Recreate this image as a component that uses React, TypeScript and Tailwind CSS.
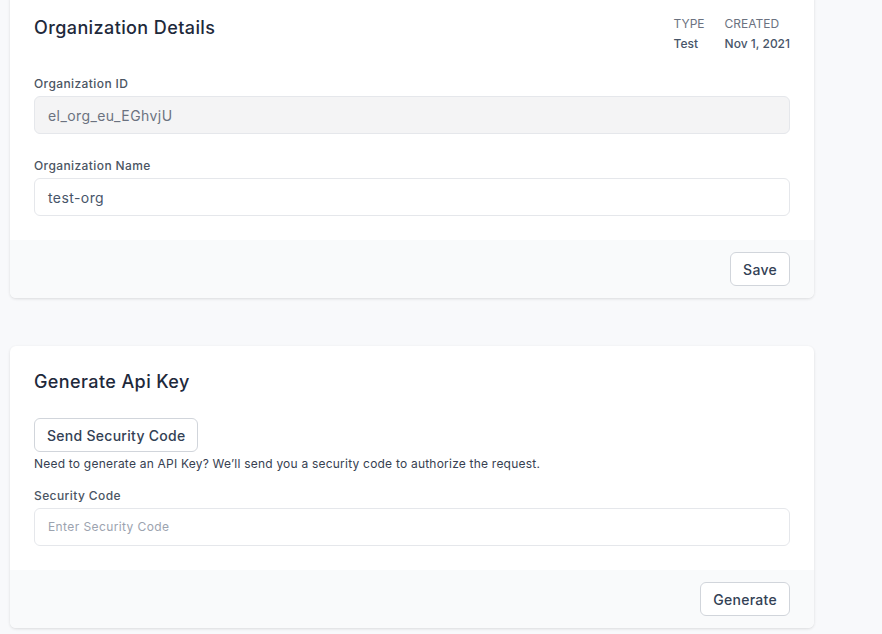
const font = { fontFamily: 'Inter, "Noto Sans", sans-serif' };

const Field = ({ label, value, placeholder, disabled }: { label: string; value?: string; placeholder?: string; disabled?: boolean }) => (
  <div className="flex flex-col gap-[4px]">
    <label className="text-[12px] leading-[16px] font-medium text-[#4b5563]">{label}</label>
    <div
      className={`h-[38px] flex items-center px-[13px] rounded-md border border-[#e5e7eb] ${
        disabled ? 'bg-[#f4f4f5] text-[#6b7280]' : 'bg-white text-[#475569]'
      }`}
    >
      {value ? (
        <span className="text-[14px] tracking-[0.03em]">{value}</span>
      ) : (
        <span className="text-[12px] text-[#9ca3af]">{placeholder}</span>
      )}
    </div>
  </div>
);

const Button = ({ children }: { children: React.ReactNode }) => (
  <button className="h-[34px] px-[12px] rounded-md border border-[#d1d5db] bg-white text-[14px] font-medium tracking-[0.02em] text-[#334155]">
    {children}
  </button>
);

export default function App() {
  return (
    <div className="min-h-screen bg-[#f8f9fb] pl-[10px] w-[882px] tracking-[0.025em]" style={font}>
      <div className="w-[804px] flex flex-col gap-[48px]">
        <div className="-mt-[8px] bg-white rounded-md shadow-[0_1px_3px_rgba(0,0,0,0.12)] overflow-hidden">
          <div className="p-[24px] flex flex-col gap-[24px]">
            <div className="flex justify-between items-start">
              <h2 className="text-[18px] leading-[24px] font-medium text-[#1e293b]">Organization Details</h2>
              <div className="flex gap-[20px] text-[12px] leading-[16px] tracking-normal">
                <div className="flex flex-col gap-[4px]">
                  <span className="text-[#6b7280] uppercase">Type</span>
                  <span className="font-medium text-[#475569]">Test</span>
                </div>
                <div className="flex flex-col gap-[4px]">
                  <span className="text-[#6b7280] uppercase">Created</span>
                  <span className="font-medium text-[#475569]">Nov 1, 2021</span>
                </div>
              </div>
            </div>
            <Field label="Organization ID" value="el_org_eu_EGhvjU" disabled />
            <Field label="Organization Name" value="test-org" />
          </div>
          <div className="bg-[#f9fafb] px-[24px] py-[12px] flex justify-end">
            <Button>Save</Button>
          </div>
        </div>

        <div className="bg-white rounded-md shadow-[0_1px_3px_rgba(0,0,0,0.12)] overflow-hidden">
          <div className="p-[24px] flex flex-col">
            <h2 className="text-[18px] leading-[24px] font-medium text-[#1e293b]">Generate Api Key</h2>
            <div className="mt-[24px]">
              <Button>Send Security Code</Button>
            </div>
            <p className="text-[12px] leading-[16px] text-[#374151] mt-[4px] tracking-[0.018em]">
              Need to generate an API Key? We’ll send you a security code to authorize the request.
            </p>
            <div className="mt-[16px]">
              <Field label="Security Code" placeholder="Enter Security Code" />
            </div>
          </div>
          <div className="bg-[#f9fafb] px-[24px] py-[12px] flex justify-end">
            <Button>Generate</Button>
          </div>
        </div>
      </div>
    </div>
  );
}
